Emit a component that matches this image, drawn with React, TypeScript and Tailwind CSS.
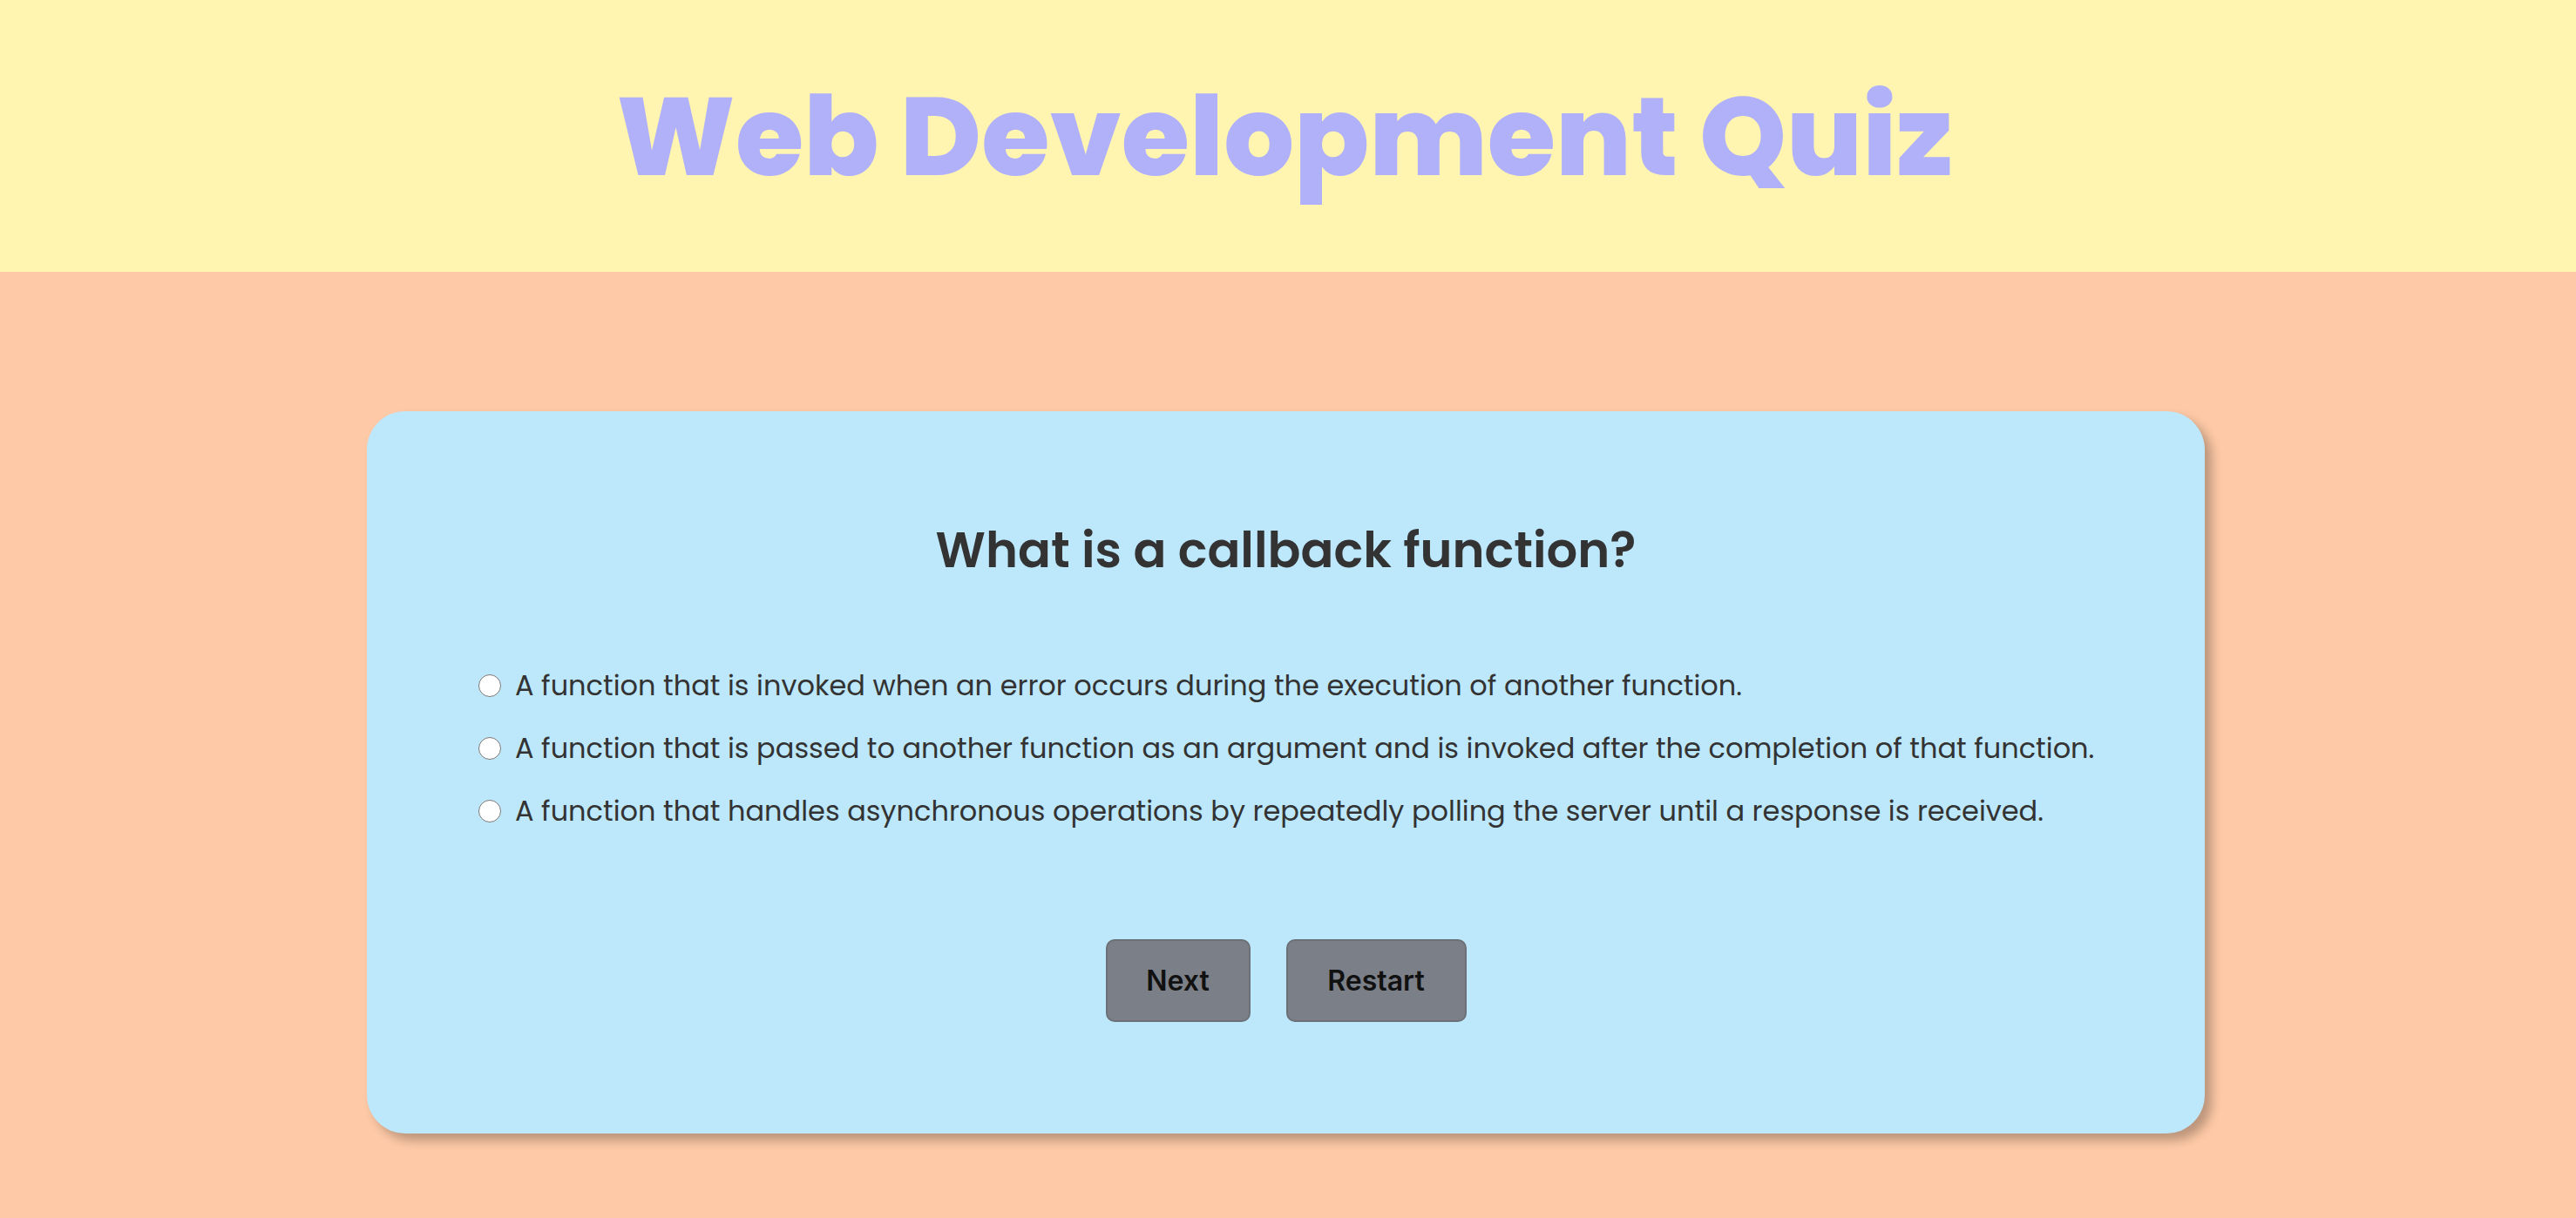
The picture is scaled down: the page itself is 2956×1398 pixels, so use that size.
import { useState } from 'react'

const options = [
  'A function that is invoked when an error occurs during the execution of another function.',
  'A function that is passed to another function as an argument and is invoked after the completion of that function.',
  'A function that handles asynchronous operations by repeatedly polling the server until a response is received.',
]

export default function App() {
  const [picked, setPicked] = useState<number | null>(null)

  return (
    <div className="min-h-[1398px] bg-[#fdc9a6] font-['Poppins','Open_Sans',sans-serif]">
      <header className="flex h-[312px] items-center justify-center bg-[#fff5b1] pr-[8px]">
        <h1 className="text-[127px] leading-none font-extrabold text-[#b1b1f9]">
          Web Development Quiz
        </h1>
      </header>

      <main className="pt-[160px] pb-[97px]">
        <div className="ml-[421px] flex h-[829px] w-[2109px] flex-col rounded-[44px] bg-[#bde8fc] pt-[122px] shadow-[8px_8px_12px_rgba(0,0,0,0.26)]">
          <h2 className="text-center text-[56px] leading-[76px] font-semibold text-[#333333]">
            What is a callback function?
          </h2>

          <div className="mt-[93px] flex flex-col gap-[24px] pl-[128px]">
            {options.map((opt, i) => (
              <label key={i} className="flex items-center gap-[16px] text-[32px] leading-[48px] text-[#333333]">
                <input
                  type="radio"
                  name="answer"
                  checked={picked === i}
                  onChange={() => setPicked(i)}
                  className="m-0 h-[26px] w-[26px] shrink-0"
                />
                <span className="whitespace-nowrap">{opt}</span>
              </label>
            ))}
          </div>

          <div className="mt-[123px] flex justify-center gap-[41px] font-['Inter',sans-serif]">
            <button className="h-[95px] w-[166px] rounded-[10px] border-2 border-[#6c7077] bg-[#7b7f87] text-[32px] font-semibold text-[#111111]">
              Next
            </button>
            <button className="h-[95px] w-[207px] rounded-[10px] border-2 border-[#6c7077] bg-[#7b7f87] text-[32px] font-semibold text-[#111111]">
              Restart
            </button>
          </div>
        </div>
      </main>
    </div>
  )
}
